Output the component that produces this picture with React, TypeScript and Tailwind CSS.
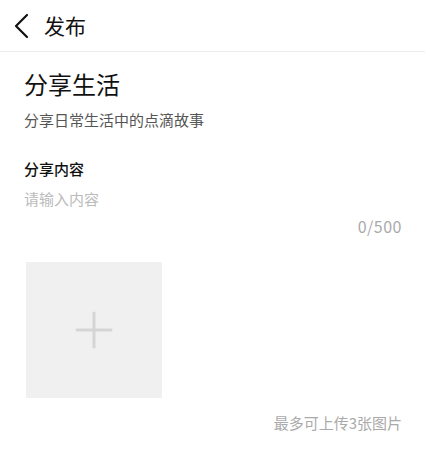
import { useState } from "react";

const cjk = { fontFamily: '"Noto Sans CJK SC", "Noto Sans", sans-serif' };

// 顶部导航
const Header = () => (
  <div className="flex h-[52px] items-center border-b border-[#ececec] bg-white pl-[13px]">
    <svg width="18" height="26" viewBox="0 0 18 26" className="shrink-0">
      <path d="M14 2 L3 13 L14 24" fill="none" stroke="#111" strokeWidth="2.2" strokeLinecap="round" strokeLinejoin="round" />
    </svg>
    <span className="ml-[13px] text-[21px] leading-none text-[#111]">发布</span>
  </div>
);

const App = () => {
  const [content, setContent] = useState("");
  const max = 500;

  return (
    <div className="min-h-[450px] w-full bg-white" style={cjk}>
      <Header />

      <div className="flex flex-col px-6 pt-[16px]">
        <h1 className="h-8 text-[24px] leading-8 font-normal text-[#111]">分享生活</h1>
        <p className="mt-[9px] h-[22px] text-[15px] leading-[22px] text-[#555]">分享日常生活中的点滴故事</p>

        <label className="mt-[27px] h-[22px] text-[15px] leading-[22px] font-medium text-[#111]">分享内容</label>
        <textarea
          value={content}
          maxLength={max}
          onChange={(e) => setContent(e.target.value)}
          placeholder="请输入内容"
          className="mt-2 h-[22px] resize-none overflow-hidden bg-transparent p-0 text-[15px] leading-[22px] text-[#333] outline-none placeholder:text-[#bbb]"
        />
        <div className="mt-[5px] mr-[-1px] h-[22px] text-right text-[16px] leading-[22px] tracking-[0.5px] text-[#aaa]">
          {content.length}/{max}
        </div>

        <button className="mt-[25px] ml-[2px] flex h-[136px] w-[136px] items-center justify-center bg-[#f0f0f0]">
          <svg width="38" height="38" viewBox="0 0 38 38">
            <path d="M19 2 V36 M2 19 H36" stroke="#d5d5d5" strokeWidth="3" strokeLinecap="round" />
          </svg>
        </button>

        <div className="mt-[14px] mr-[-1px] h-[22px] text-right text-[15px] leading-[22px] text-[#aaa]">最多可上传3张图片</div>
      </div>
    </div>
  );
};

export default App;
